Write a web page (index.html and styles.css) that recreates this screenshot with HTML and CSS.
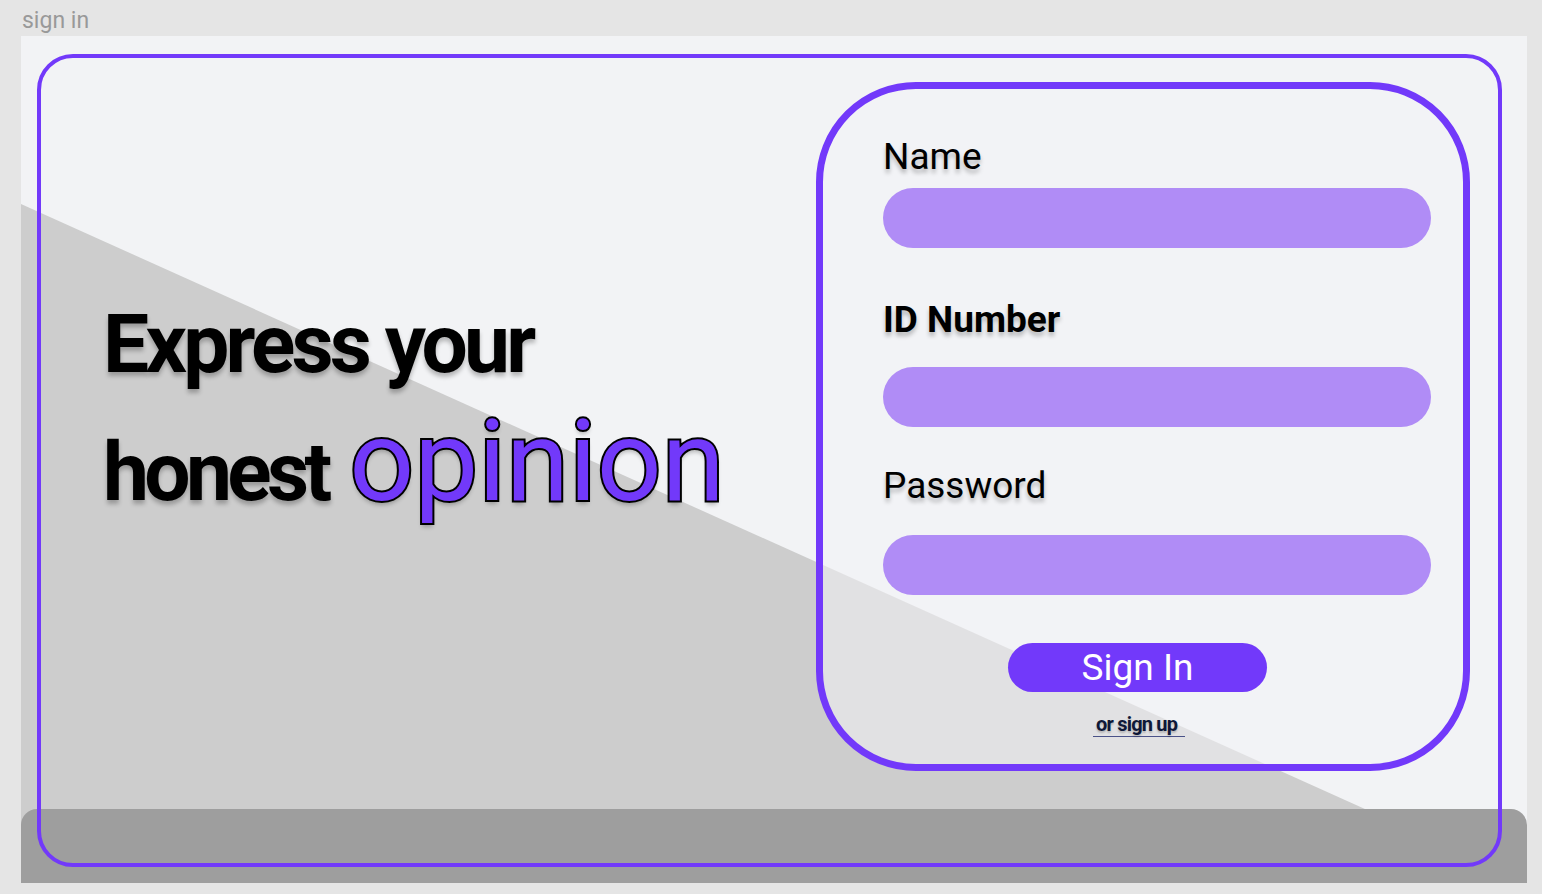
FILE: index.html
```html
<!DOCTYPE html>
<html lang="en">
<head>
    <meta charset="UTF-8">
    <meta name="viewport" content="width=device-width, initial-scale=1.0">
    <title>sign in</title>
    <link rel="stylesheet" href="styles.css">
</head>
<body>
    <div class="frame-label">sign in</div>
    <div class="frame">
        <div class="panel">
            <div class="headline">
                <div class="line">Express your</div>
                <div class="line"><span class="word-tight">honest</span> <span class="accent">opinion</span></div>
            </div>

            <form class="card" onsubmit="return false">
                <label class="field-label label-name" for="name">Name</label>
                <input class="field-input" type="text" id="name">

                <label class="field-label label-id" for="idNumber">ID Number</label>
                <input class="field-input" type="text" id="idNumber">

                <label class="field-label label-pass" for="password">Password</label>
                <input class="field-input" type="password" id="password">

                <button type="submit" class="btn-signin">Sign In</button>
                <a href="#" class="signup-link">or sign up</a>
            </form>
        </div>
        <div class="bottom-bar"></div>
    </div>
</body>
</html>
```

FILE: styles.css
```css
body {
    margin: 0;
    background-color: #e5e5e5;
    font-family: Roboto, "Liberation Sans", Arial, sans-serif;
}
.frame-label {
    height: 36px;
    box-sizing: border-box;
    padding: 10px 0 0 22px;
    font-size: 23px;
    line-height: 22px;
    color: #999;
}
.frame {
    position: relative;
    display: flex;
    width: 1506px;
    height: 847px;
    margin-left: 21px;
    background: #f2f3f5;
}
/* grey diagonal behind everything */
.frame::before {
    content: "";
    position: absolute;
    inset: 0;
    background: #cdcdcd;
    clip-path: polygon(0 168px, 100% 846px, 100% 100%, 0 100%);
}
.bottom-bar {
    position: absolute;
    left: 0;
    right: 0;
    bottom: 0;
    height: 74px;
    background: #9e9e9e;
    border-radius: 16px 16px 0 0;
}
.panel {
    position: relative;
    z-index: 1;
    flex: 1;
    display: flex;
    justify-content: space-between;
    align-items: flex-start;
    margin: 18px 25px 16px 16px;
    border: 4px solid #7239fa;
    border-radius: 36px;
}
.headline {
    margin: 222px 0 0 62px;
    font-size: 82px;
    font-weight: bold;
    letter-spacing: -3.8px;
    color: #000;
    text-shadow: 0 4px 4px rgba(0, 0, 0, 0.25);
    white-space: nowrap;
}
.headline .line {
    line-height: 128px;
}
.line .word-tight {
    letter-spacing: -4.6px;
}
.accent {
    margin-left: 5px;
    font-size: 114px;
    font-weight: normal;
    line-height: 100px;
    letter-spacing: 0;
    color: #7239fa;
    -webkit-text-stroke: 4px #000;
    paint-order: stroke fill;
}
.card {
    display: flex;
    flex-direction: column;
    align-items: flex-start;
    box-sizing: border-box;
    width: 654px;
    height: 689px;
    margin: 24px 28px 0 0;
    padding: 47px 32px 0 60px;
    border: 7px solid #7239fa;
    border-radius: 100px;
    background: rgba(242, 243, 245, 0.55);
}
.field-label {
    font-size: 37px;
    line-height: 42px;
    color: #000;
    text-shadow: 0 4px 4px rgba(0, 0, 0, 0.25);
}
.label-name {
    margin-bottom: 10px;
}
.label-id {
    margin: 51px 0 26px;
    font-weight: bold;
}
.label-pass {
    margin: 38px 0 28px;
}
.field-input {
    display: block;
    width: 548px;
    height: 60px;
    box-sizing: border-box;
    padding: 0 24px;
    border: none;
    border-radius: 30px;
    background: #b08cf6;
    font-size: 24px;
    outline: none;
}
.btn-signin {
    margin: 48px 0 0 125px;
    width: 259px;
    height: 49px;
    padding: 0;
    border: none;
    border-radius: 25px;
    background: #7239fa;
    color: white;
    font-family: inherit;
    font-size: 37px;
    line-height: 47px;
    cursor: pointer;
}
.signup-link {
    margin: 20px 0 0 210px;
    padding: 0 8px 0 3px;
    font-size: 20px;
    font-weight: bold;
    line-height: 24px;
    letter-spacing: -0.8px;
    color: #0e1838;
    text-decoration: none;
    border-bottom: 1px solid #4a5288;
    text-shadow: 0 2px 2px rgba(0, 0, 0, 0.2);
}
```
